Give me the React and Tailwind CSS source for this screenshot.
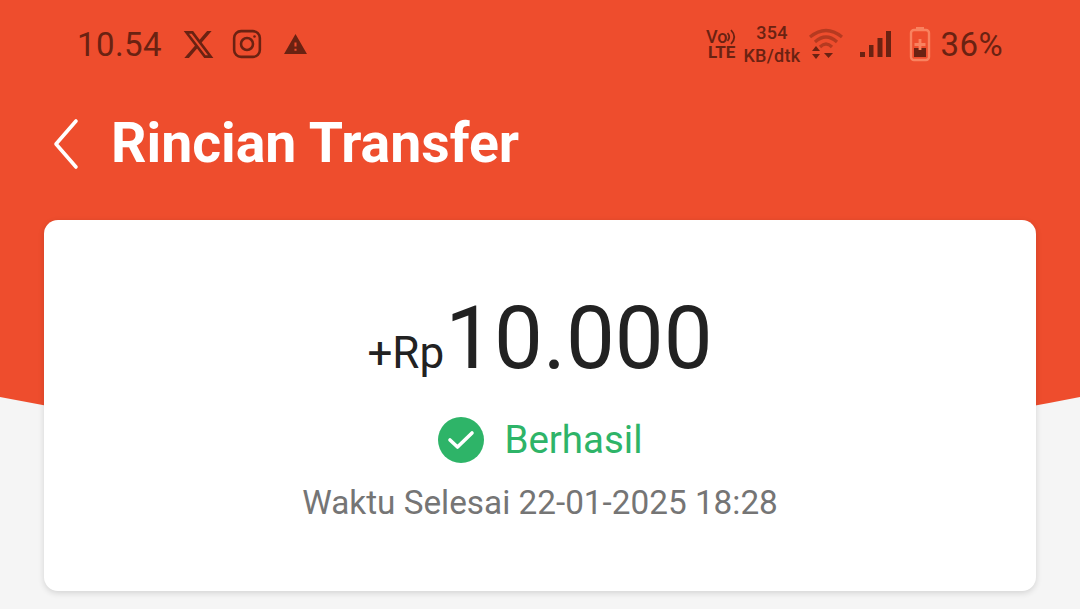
import { FaXTwitter } from "react-icons/fa6";
import { MdWarning } from "react-icons/md";

const font = { fontFamily: "Roboto, sans-serif" };

function Instagram() {
    return (
        <svg width="30" height="30" viewBox="0 0 28 28" fill="none" stroke="#6a2212" strokeWidth="2.4">
            <rect x="2" y="2" width="24" height="24" rx="6.5" />
            <circle cx="14" cy="14" r="5.6" />
            <circle cx="21" cy="7" r="1.2" fill="#6a2212" stroke="none" />
        </svg>
    );
}

function VoArcs() {
    return (
        <svg width="10" height="16" viewBox="0 0 10 16" fill="none" stroke="#6a2212" strokeWidth="1.8">
            <path d="M0.500 4 Q4 8 0.500 12" />
            <path d="M4 1 Q10.500 8 4 15" />
        </svg>
    );
}

function Wifi() {
    return (
        <svg width="36" height="34" viewBox="0 0 36 34" fill="none">
            <path d="M2 10 Q18 -3 34 10" stroke="#b63a20" strokeWidth="3.2" />
            <path d="M7 15 Q18 5 29 15" stroke="#b63a20" strokeWidth="3.2" />
            <path d="M12 20 Q18 14 24 20" stroke="#b63a20" strokeWidth="3.2" />
            <path d="M4 24 L8 19 L12 24 Z" fill="#6a2212" />
            <path d="M4 27 L12 27 L8 32 Z" fill="#6a2212" />
            <path d="M16 26 L25 26 L20.5 31 Z" fill="#6a2212" />
        </svg>
    );
}

function Signal() {
    return (
        <svg width="31" height="28" viewBox="0 0 31 28" fill="#6a2212">
            <rect x="0" y="22" width="5" height="5" />
            <rect x="9" y="15" width="4.500" height="12" />
            <rect x="17.500" y="8" width="5" height="19" />
            <rect x="26" y="1" width="5" height="26" />
        </svg>
    );
}

function Battery() {
    return (
        <svg width="22" height="36" viewBox="0 0 22 36" fill="none">
            <rect x="7" y="1" width="8" height="4" fill="#f9825f" />
            <rect x="2" y="4" width="18" height="30" rx="3" stroke="#f9825f" strokeWidth="2.4" />
            <rect x="5" y="22" width="12" height="9" fill="#6a2212" />
            <path d="M11 13 V24 M5.500 18.500 H16.500" stroke="#f9825f" strokeWidth="2.8" />
        </svg>
    );
}

function StatusBar() {
    return (
        <div className="h-[88px] pl-[77px] pr-[77px] flex items-center justify-between text-[#6a2212]">
            <div className="flex items-center">
                <span className="text-[33px] leading-none tracking-[0.4px]">10.54</span>
                <FaXTwitter className="ml-[20px] text-[33px]" />
                <div className="ml-[17px] flex"><Instagram /></div>
                <MdWarning className="ml-[21px] text-[25px]" />
            </div>
            <div className="flex items-center">
                <div className="flex flex-col items-center font-bold text-[17px] leading-[15px]">
                    <div className="flex items-center">
                        <span className="text-[18px] font-medium">Vo</span>
                        <VoArcs />
                    </div>
                    <span>LTE</span>
                </div>
                <div className="ml-[6px] flex flex-col items-center font-medium text-[18px] leading-[23px] tracking-[0.3px]">
                    <span>354</span>
                    <span>KB/dtk</span>
                </div>
                <div className="ml-[7px] flex"><Wifi /></div>
                <div className="ml-[16px] flex"><Signal /></div>
                <div className="ml-[18px] flex"><Battery /></div>
                <span className="ml-[10px] text-[33px] leading-none tracking-[0.4px]">36%</span>
            </div>
        </div>
    );
}

export default function App() {
    return (
        <div className="relative w-full h-[609px] overflow-hidden bg-[#f5f5f5]" style={font}>
            <svg className="absolute left-0 top-0" width="1080" height="609" viewBox="0 0 1080 609">
                <path d="M0 0 H1080 V397 Q540 505 0 397 Z" fill="#ee4d2d" />
            </svg>

            <div className="relative">
                <StatusBar />

                <div className="h-[132px] pl-[53px] pb-[21px] flex items-center">
                    <svg width="26" height="52" viewBox="0 0 26 52" fill="none" stroke="white" strokeWidth="3.6" strokeLinecap="round" strokeLinejoin="round">
                        <path d="M23 3 L3 26 L23 49" />
                    </svg>
                    <h1 className="ml-[32px] text-white font-bold text-[55.400px] leading-none">Rincian Transfer</h1>
                </div>

                <div className="mx-[44px] h-[371px] bg-white rounded-[14px] shadow-[0_2px_6px_rgba(0,0,0,0.14)] flex flex-col items-center">
                    <div className="mt-[64px] flex items-baseline text-[#222222]">
                        <span className="text-[44px] leading-none">+Rp</span>
                        <span className="ml-[1px] text-[87px] leading-[108px]">10.000</span>
                    </div>
                    <div className="mt-[25px] flex items-center">
                        <div className="ml-[1px] w-[46px] h-[46px] rounded-full bg-[#2eb468] flex items-center justify-center">
                            <svg width="28" height="22" viewBox="0 0 28 22" fill="none" stroke="white" strokeWidth="3.6" strokeLinecap="round" strokeLinejoin="round">
                                <path d="M3 11 L10.500 18 L25 4" />
                            </svg>
                        </div>
                        <span className="ml-[20px] text-[38.500px] leading-none text-[#2eb468]">Berhasil</span>
                    </div>
                    <p className="mt-[23px] text-[33.300px] leading-none text-[#757575]">Waktu Selesai 22-01-2025 18:28</p>
                </div>
            </div>
        </div>
    );
}
